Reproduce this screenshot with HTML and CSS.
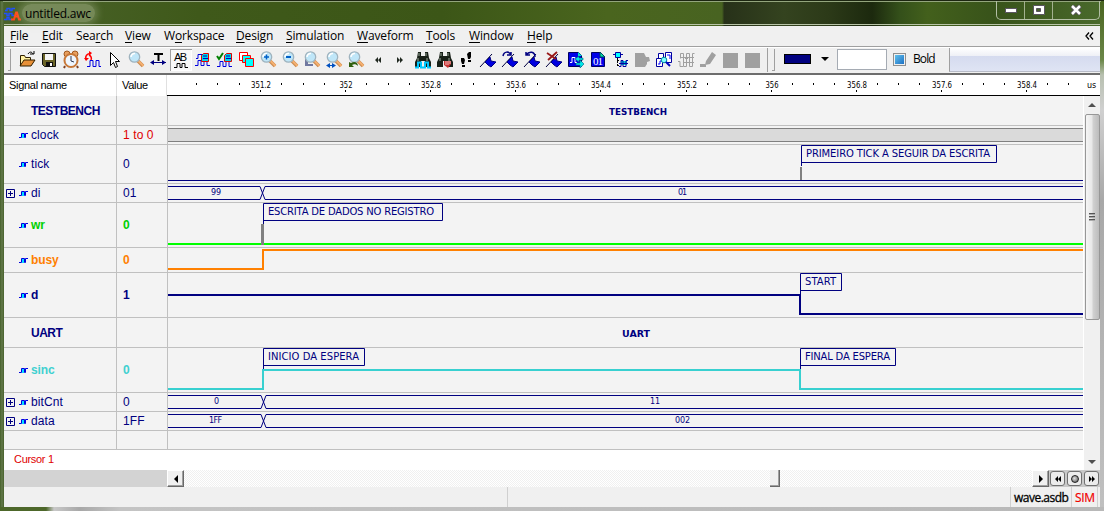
FILE: index.html
```html
<!DOCTYPE html>
<html lang="en">
<head>
  <meta charset="UTF-8">
  <title>untitled.awc</title>
  <link rel="stylesheet" href="styles.css">
</head>
<body>
  <svg class="defs">
    <symbol id="lens" viewBox="0 0 22 22">
      <path d="M12 12l5 5" stroke="#c98a50" stroke-width="3.500"/>
      <path d="M12.5 12l5 5" stroke="#f5b070" stroke-width="2"/>
      <circle cx="8.500" cy="8" r="5.200" fill="#bfe6f8" stroke="#9fb3be" stroke-width="1.300"/>
      <path d="M5 8a3.500 3.500 0 0 1 4-3.500" stroke="#fff" stroke-width="1.500" fill="none"/>
    </symbol>
    <symbol id="flag" viewBox="0 0 22 22">
      <path d="M2 18L14 5" stroke="#000040" fill="none"/>
      <path d="M7 13l5-5 1 4 5 1-5 5-3-2z" fill="#0000e0" stroke="#000080"/>
    </symbol>
    <symbol id="wave" viewBox="0 0 9 7">
      <path d="M3 1h2v5H3z" fill="#00e0ff"/>
      <path d="M0 5.500h2.500v-4h3v4h1v-4h2.500" fill="none" stroke="#0000e0"/>
    </symbol>
    <symbol id="plus" viewBox="0 0 9 9">
      <path d="M.5.5h8v8h-8zM2 4.500h5M4.500 2v5" fill="none" stroke="#000080"/>
    </symbol>
    <symbol id="binoc" viewBox="0 0 22 22">
      <path d="M6 3h3v4h4V3h3l1 6 2 4v5h-6v-6H9v6H3v-5l2-4z" fill="#182018"/>
      <path d="M7 4v3M14 4v3M6 9v3M15 9v3" stroke="#9aa89a"/>
    </symbol>
  </svg>

  <div class="window">
    <header class="title-bar">
      <svg class="app-icon" width="17" height="14" viewBox="0 0 17 14">
        <path d="M1 3.500h2v-2h3v2h2v-2h3M0 6.500h3v2h2v-2h3v2h2M0 12.500h3v-2h2v2h3" fill="none" stroke="#2050ff" stroke-width="1.400"/>
        <path d="M7 12.500h3l2-7h1l2 7h2M10 9.500h5" fill="none" stroke="#ff4a18" stroke-width="2"/>
      </svg>
      <span class="title">untitled.awc</span>
      <div class="window-buttons">
        <span><svg width="14" height="10"><rect x="1.500" y="3.500" width="11" height="4" fill="#fff" stroke="#5a5560"/></svg></span>
        <span><svg width="14" height="12"><path d="M1.500 1.500h11v9h-11z" fill="#fff" stroke="#5a5560"/><path d="M4.500 4.500h4v3h-4z" fill="#4a6030" stroke="#5a5560"/></svg></span>
        <span class="close"><svg width="14" height="12"><path d="M3 2l8 8M11 2l-8 8" stroke="#5a5560" stroke-width="4.500"/><path d="M3 2l8 8M11 2l-8 8" stroke="#fff" stroke-width="2.500"/></svg></span>
      </div>
    </header>

    <div class="client">
      <nav class="menu">
        <span><u>F</u>ile</span><span><u>E</u>dit</span><span>Sea<u>r</u>ch</span><span><u>V</u>iew</span><span>W<u>o</u>rkspace</span><span><u>D</u>esign</span><span><u>S</u>imulation</span><span><u>W</u>aveform</span><span><u>T</u>ools</span><span><u>W</u>indow</span><span><u>H</u>elp</span>
        <svg class="chevrons" width="9" height="8"><path d="M4 .5L1 4l3 3.500M8 .5L5 4l3 3.500" fill="none" stroke="#000" stroke-width="1.300"/></svg>
      </nav>

      <div class="toolbar">
        <i class="grip"></i>
        <div class="tools">
          <!-- open, save, recent, restart -->
          <svg><path d="M4.500 16.500v-10h4l1 2h5v3" fill="#fff0a0" stroke="#302000"/><path d="M4 17l4-6h11l-4 6z" fill="#e89038" stroke="#302000"/><path d="M12 5c2-3 4-2 5 0m-3 0h4V2" fill="none" stroke="#000"/></svg>
          <svg><path d="M4.500 4.500h13v13h-11l-2-2z" fill="#6a6428" stroke="#101010"/><path d="M7 5h8v6H7z" fill="#f4f4f4"/><path d="M8 13h7v5H8z" fill="#101010"/><path d="M12 14h2v3h-2z" fill="#fff"/></svg>
          <svg><path d="M5 17l-1 2M17 17l1 2" stroke="#804020" stroke-width="2"/><circle cx="7" cy="5" r="3" fill="#e8a060" stroke="#a05820"/><circle cx="15" cy="5" r="3" fill="#e8a060" stroke="#a05820"/><circle cx="11" cy="11.500" r="6.500" fill="#eef6ff" stroke="#c87838" stroke-width="2"/><path d="M11 7v5l3 1" fill="none" stroke="#303850"/></svg>
          <svg><path d="M4 10c-1-3 1-5 4-5.500M9 11c1-2 0-4-2-5" fill="none" stroke="#f00" stroke-width="1.500"/><path d="M7 2l3 2-3 3zM2 9h5l-3 3z" fill="#f00"/><path d="M5 17.500h3v-6h3v6h3v-6h3v6h2" fill="none" stroke="#0000e0"/></svg>
          <svg><path d="M6.500 3.500v13l3-3 2 5 2-1-2-5h4z" fill="#fff" stroke="#000"/></svg>
          <svg><use href="#lens"/></svg>
          <svg><path d="M6 5h9M10.500 5v7" stroke="#000" stroke-width="2"/><path d="M4 13.500h14" stroke="#000080"/><path d="M6 11l-4 2.500L6 16zM14 11l4 2.500-4 2.500z" fill="#000080"/></svg>
          <svg class="pressed"><text x="4" y="12" class="ab" textLength="13">AB</text><path d="M4 18.500h3v-4h3v4h2v-4h3v4h3" fill="none" stroke="#000"/></svg>
          <!-- signal tools -->
          <svg><path d="M3 16.500h3v-5h3v5h3v-5h3v5h3M4 9.500h2v-4h4v4" fill="none" stroke="#0000e0"/><path d="M9.500 6.500l2-2h5v8h-7z" fill="#00d8e8" stroke="#e00000"/><path d="M11 9.500h5M11 7h4" stroke="#0000c0"/></svg>
          <svg><path d="M3 7l2 3 4-6" fill="none" stroke="#008000" stroke-width="2"/><path d="M3 17.500h3v-5h3v5h3v-5h3v5h3" fill="none" stroke="#0000e0"/><path d="M10.500 6.500l2-2h5v8h-7z" fill="#00d8e8" stroke="#e00000"/><path d="M12 9.500h5M12 7h4" stroke="#0000c0"/></svg>
          <svg><g fill="#00ffff" stroke="#f00"><path d="M3.500 3.500h8v8h-8z" fill="#fff"/><path d="M6.500 6.500h8v7h-8z"/><path d="M9.500 9.500h8v8h-8z"/></g></svg>
          <!-- zooms -->
          <svg><use href="#lens"/><path d="M6 8h5M8.500 5.500v5" stroke="#0060c8" stroke-width="1.500"/></svg>
          <svg><use href="#lens"/><path d="M6 8h5" stroke="#0060c8" stroke-width="2"/></svg>
          <svg><path d="M3 7h3v10H3zM6 15h5v2H6z" fill="#7078a0"/><use href="#lens"/></svg>
          <svg><use href="#lens"/><path d="M4 16.500h6" stroke="#0050c0"/><path d="M6 14l-4 2.500L6 19zM8 14l4 2.500-4 2.500z" fill="#0050c0"/></svg>
          <svg><use href="#lens"/><path d="M3 13v5h5l-2-2c2-1 4-1 6 1 0-4-4-5-7-3z" fill="#306010"/></svg>
          <svg><path d="M10 8v6l-3-3zM13 8v6l-3-3z" fill="#202820"/></svg>
          <svg><path d="M7 8v6l3-3zM10 8v6l3-3z" fill="#202820"/></svg>
          <svg><use href="#binoc"/><path d="M3 18.500h3v-5h3v5h4v-5h3v5h3" fill="none" stroke="#00c8ff" stroke-width="2"/></svg>
          <svg><use href="#binoc"/><path d="M10 12h7v3l-3 4-4-3z" fill="#c83030"/><path d="M12 12v4M14 12v4M16 12v3" stroke="#fff" stroke-width=".7"/></svg>
          <svg><path d="M5 9h3l1 2-1 4H6l-1-3zM6 16h3v2H6zM11 5l2-2h2v5l-1 2h-2zM12 11h3v2h-3z" fill="#000"/></svg>
          <svg><use href="#flag"/></svg>
          <svg><use href="#flag"/><path d="M3 7c1-5 6-5 8-1m-4 0h4V3" fill="none" stroke="#000080" stroke-width="1.500"/></svg>
          <svg><use href="#flag"/><path d="M13 8c0-6-6-6-9-2m0-3v3h4" fill="none" stroke="#000080" stroke-width="1.500"/></svg>
          <svg><use href="#flag"/><path d="M3 4l9 6M13 3L4 11" stroke="#981818" stroke-width="1.800"/></svg>
          <!-- views -->
          <svg><path d="M2.500 3.500h10l3 3v11h-13z" fill="#0000e8" stroke="#000060"/><path d="M12 3v4h4z" fill="#00e0d0"/><path d="M4 13.500h2v-5h3v5h2" fill="none" stroke="#fff"/><path d="M9 10l4-3v2h4v2h-4v2zM18 15l-4-4v3h-4v2h4v3z" fill="#00e8e8" stroke="#006080" stroke-width=".6"/></svg>
          <svg><path d="M3.500 3.500h9l4 4v10h-13z" fill="#0000e8" stroke="#000060"/><path d="M12 3v5h5z" fill="#00e0a0" stroke="#004060"/><text x="5" y="16" class="bin" textLength="10">01</text></svg>
          <svg><path d="M5.500 3.500h5v5h-5z" fill="#00ffff" stroke="#0000a0"/><path d="M3 5.500h2M11 5.500h2" stroke="#0000a0"/><path d="M7.500 9v8M7 11.500h3M7 16.500h3" stroke="#000" stroke-dasharray="2 1"/><path d="M11 12h6v4h-6z" fill="#00c8d8"/><path d="M9 17.500h2v-6h2v6h3v-6h2M9 14.500h9" fill="none" stroke="#0000a0"/></svg>
          <svg><path d="M3 4h9l2 4h3l1 4-3 1v2l-2 3H3z" fill="#a0a0a0"/></svg>
          <svg><path d="M2.500 9.500h6v8h-6zM4.500 4.500h5v5h-5zM11.500 3.500h6v10h-6z" fill="#fff" stroke="#0000a0"/><path d="M4 15h2v-3h2M13 6h3v4" fill="none" stroke="#00f"/><circle cx="10" cy="11" r="2.800" fill="#80ffff" stroke="#0088a0"/><path d="M12 13l4 4" stroke="#0000c0" stroke-width="2"/></svg>
          <svg><path d="M4.500 9.500v-5h3v13h3v-13h3v13h3v-13h2M2 12.500h2v5h3M9 9.500h3M7 13.500h11M5 8.500h13" fill="none" stroke="#a0a0a0"/></svg>
          <svg><path d="M8 12l6-9 4 3-6 9-5 1zM2 15h6v3H2z" fill="#a0a0a0"/></svg>
          <svg><path d="M3 4h15v15H3z" fill="#a0a0a0"/></svg>
          <svg><path d="M3 4h15v15H3z" fill="#a0a0a0"/></svg>
        </div>
        <i class="separator"></i>
        <i class="grip"></i>
        <span class="color-box"></span>
        <i class="drop-arrow"></i>
        <span class="size-box"></span>
        <span class="check"></span>
        <span class="bold-label">Bold</span>
        <div class="toolbar-rest"></div>
      </div>

      <main class="viewer">
        <div class="columns">
          <span class="col-name">Signal name</span>
          <span class="col-value">Value</span>
          <svg class="ruler" id="ruler" width="933" height="20"></svg>
        </div>

        <div class="body">
          <div class="signals">
            <div class="row h30 strong"><span class="name"><i></i><i></i>TESTBENCH</span><span class="value"></span>
              <svg><text x="441" y="19" class="group" textLength="58" lengthAdjust="spacingAndGlyphs">TESTBENCH</text></svg></div>
            <div class="row h19"><span class="name"><i></i><svg><use href="#wave"/></svg>clock</span><span class="value red">1 to 0</span>
              <svg><path d="M0 2h916v14H0z" class="clock-fill"/><path d="M0 2.500h916M0 15.500h916" class="clock-edge"/></svg></div>
            <div class="row h39"><span class="name"><i></i><svg><use href="#wave"/></svg>tick</span><span class="value">0</span>
              <svg><path d="M0 35.500h916"/><path d="M633 22v13" class="event"/><path d="M633.500 21V.5h195v17h-195"/><text x="638" y="12" class="mark" textLength="184">PRIMEIRO TICK A SEGUIR DA ESCRITA</text></svg></div>
            <div class="row h19"><span class="name"><svg class="expand"><use href="#plus"/></svg><svg><use href="#wave"/></svg>di</span><span class="value">01</span>
              <svg><path d="M0 2.500h92l5 13h820M0 15.500h92l5-13h820"/><text x="43" y="11" class="bus" textLength="10">99</text><text x="510" y="11" class="bus" textLength="9">01</text></svg></div>
            <div class="row h45 green"><span class="name"><i></i><svg><use href="#wave"/></svg>wr</span><span class="value">0</span>
              <svg><path d="M0 41h916" class="thick green-line"/><path d="M94.500 21v21" class="event wide"/><path d="M95.500 21V.5h179v17h-179"/><text x="100" y="12" class="mark" textLength="166">ESCRITA DE DADOS NO REGISTRO</text></svg></div>
            <div class="row h25 orange"><span class="name"><i></i><svg><use href="#wave"/></svg>busy</span><span class="value">0</span>
              <svg><path d="M0 21h95V2h821" class="thick orange-line"/></svg></div>
            <div class="row h45 strong"><span class="name"><i></i><svg><use href="#wave"/></svg>d</span><span class="value">1</span>
              <svg><path d="M0 22h632v19h284" class="thick"/><path d="M632.500 22V.5h41v17h-41"/><text x="637" y="12" class="mark" textLength="31">START</text></svg></div>
            <div class="row h30 strong"><span class="name"><i></i><i></i>UART</span><span class="value"></span>
              <svg><text x="454" y="19" class="group" textLength="28" lengthAdjust="spacingAndGlyphs">UART</text></svg></div>
            <div class="row h45 teal"><span class="name"><i></i><svg><use href="#wave"/></svg>sinc</span><span class="value">0</span>
              <svg><path d="M0 41h95V22h537v19h284" class="thick teal-line"/><path d="M95.500 21V.5h101v17h-101M632.500 21V.5h95v17h-95"/><text x="100" y="12" class="mark" textLength="91">INICIO DA ESPERA</text><text x="637" y="12" class="mark" textLength="85">FINAL DA ESPERA</text></svg></div>
            <div class="row h19"><span class="name"><svg class="expand"><use href="#plus"/></svg><svg><use href="#wave"/></svg>bitCnt</span><span class="value">0</span>
              <svg><path d="M0 2.500h93l5 13h820M0 15.500h93l5-13h820"/><text x="46" y="11" class="bus">0</text><text x="482" y="11" class="bus">11</text></svg></div>
            <div class="row h19"><span class="name"><svg class="expand"><use href="#plus"/></svg><svg><use href="#wave"/></svg>data</span><span class="value">1FF</span>
              <svg><path d="M0 2.500h93l5 13h820M0 15.500h93l5-13h820"/><text x="41" y="11" class="bus" textLength="13">1FF</text><text x="507" y="11" class="bus" textLength="15">002</text></svg></div>
            <div class="row h19"><span class="name"></span><span class="value"></span><svg></svg></div>
            <div class="cursor-row"><span>Cursor 1</span></div>
          </div>
          <div class="v-scroll">
            <i class="arrow up"></i>
            <div class="v-thumb"><i></i><i></i><i></i></div>
            <i class="arrow down"></i>
          </div>
        </div>

        <div class="h-scroll">
          <div class="h-pad"></div>
          <span class="step"><svg width="4" height="8"><path d="M4 0v8L0 4z"/></svg></span>
          <div class="h-track"><span class="h-thumb"></span></div>
          <span class="step"><svg width="4" height="8"><path d="M0 0v8l4-4z"/></svg></span>
          <div class="jump-buttons">
            <span><svg width="8" height="6"><path d="M4 0v6L1 3zM7 0v6L4 3z"/></svg></span>
            <span><i class="ball"></i></span>
            <span><svg width="8" height="6"><path d="M1 0v6l3-3zM4 0v6l3-3z"/></svg></span>
          </div>
        </div>
      </main>

      <footer class="status">
        <span class="status-main"></span>
        <span class="status-file"></span>
        <span class="db">wave.asdb</span>
        <span class="sim">SIM</span>
      </footer>
    </div>
  </div>

  <script>
    // time ruler: one label every 85px, three dots between labels
    const ruler = document.getElementById("ruler");
    let marks = "";
    for (let i = 0; i < 10; i++) {
      const x = Math.round(93 + i * 85.100);
      const label = String(Math.round((351.2 + i * 0.8) * 10) / 10);
      const w = label.length > 3 ? 20 : 13;
      marks += `<text x="${x + 1 - w / 2}" y="13" textLength="${w}" lengthAdjust="spacingAndGlyphs">${label}</text><path d="M${x + .5} 15v2"/>`;
    }
    for (let i = -3; i < 40; i++) {
      const x = Math.round(93 + i * 21.270);
      if (i % 4 !== 0 && x < 905) marks += `<path d="M${x + .5} 8v2"/>`;
    }
    ruler.innerHTML = marks + '<text x="920" y="13">us</text>';
  </script>
</body>
</html>
```
FILE: styles.css
```css
* { box-sizing: border-box; }
body {
  margin: 0;
  width: 1104px;
  height: 511px;
  overflow: hidden;
  font-family: "Open Sans", "Noto Sans", sans-serif;
  font-size: 12px;
  color: #000;
}
.defs { display: none; }
svg { flex: none; }
.window {
  height: 511px;
  padding: 0 4px 4px;
  background:
    linear-gradient(#1c2610, #1c2610) left top / 100% 1px no-repeat,
    linear-gradient(#93a57d, #93a57d) 3px 1px / 1098px 1px no-repeat,
    linear-gradient(90deg, #4d672a 46px, #c8c8c8 54px, #a8a8a8 80px, #c4c4c4 120px, #b8b8b8) left bottom / 100% 4px no-repeat,
    linear-gradient(#48631f 0, #6b8748 60px, #b8c0b0 75px, #d0d0d0 110px, #a8a8a8 200px, #c0c0c0 100%) right top / 4px 100% no-repeat,
    linear-gradient(90deg, #46602a, #63794b 50%, #46602a) left top / 4px 100% no-repeat,
    linear-gradient(90deg, #4b642b 0, #3f591a 18%, #3c5617 40%, #4a651e 55%, #486321 65.4%, #273119 65.6%, #34431f 71%, #2c3a18 75%, #1c290e 79%, #34501a 81.500%, #43601c 84%, #38531a 90%, #4a6a2c 100%);
}

/* title bar */
.title-bar {
  height: 25px;
  display: flex;
  padding-top: 1px;
  border-bottom: 1px solid #b8c4a8;
  margin-bottom: 1px;
}
.app-icon { margin-top: 6px; }
.title {
  margin: 3px 0 0 1px;
  padding: 0 4px 0 3px;
  height: 18px;
  line-height: 19px;
  font-size: 12px;
  letter-spacing: -.2px;
  background: rgba(190, 200, 165, .4);
  border-radius: 9px;
  box-shadow: 0 0 7px 3px rgba(190, 200, 165, .3);
}
.window-buttons {
  margin-left: auto;
  width: 104px;
  height: 19px;
  display: flex;
  border: 1px solid #b3bfa5;
  border-top: 0;
  border-radius: 0 0 5px 5px;
}
.window-buttons span {
  width: 28px;
  display: flex;
  justify-content: center;
  align-items: center;
  border-right: 1px solid #a3b190;
}
.window-buttons .close { width: 46px; border: 0; }

.client {
  height: 481px;
  background: #f0f0f0;
  display: flex;
  flex-direction: column;
}
/* menu */
.menu {
  height: 21px;
  padding-left: 6px;
  border-bottom: 1px solid #a0a0a0;
  display: grid;
  grid-template-columns: 32px 34px 49px 39px 72px 50px 71px 69px 43px 58px 40px 1fr;
  line-height: 20px;
  letter-spacing: -.15px;
}
.menu u { text-underline-offset: 2px; }
.chevrons { justify-self: end; margin: 6px 6px 0 0; }

/* toolbar */
.toolbar {
  height: 28px;
  display: flex;
  border-top: 1px solid #fff;
  border-bottom: 2px solid #6d6d6d;
}
.grip {
  width: 3px;
  height: 22px;
  margin: 1px 0 0 4px;
  border: 1px solid #a0a0a0;
  border-width: 0 1px 1px 0;
}
.tools { display: flex; margin-left: 5px; }
.tools svg { width: 22px; height: 22px; margin-top: 1px; fill: none; }
.tools .pressed { background: #f8f8f8; box-shadow: inset 1px 1px #a0a0a0, inset -1px -1px #fff; }
.ab { font: 11px "Liberation Sans", sans-serif; fill: #000; }
.bin { font: 11px "Liberation Serif", serif; fill: #fff; }
.separator { width: 1px; height: 24px; margin-left: 3px; background: #a0a0a0; }
.separator + .grip { margin-left: 4px; }
.color-box { width: 27px; height: 10px; margin: 6px 0 0 9px; background: #000080; border: 1px solid #000; }
.drop-arrow { height: 0; border: 4px solid transparent; border-top-color: #000; border-bottom: 0; margin: 9px 0 0 10px; }
.size-box { width: 50px; height: 21px; margin: 1px 0 0 8px; background: #fff; border: 1px solid #a5abb3; }
.check {
  width: 13px;
  height: 13px;
  margin: 5px 0 0 6px;
  border: 1px solid #8e8f8f;
  background: linear-gradient(135deg, #67c9f0, #1668c0);
  background-clip: content-box;
  padding: 1px;
}
.bold-label { width: 36px; margin: 2px 0 0 7px; letter-spacing: -.9px; line-height: 18px; }
.toolbar-rest {
  flex: 1;
  height: 24px;
  border-left: 1px solid #a0a0a0;
  border-bottom: 1px solid #b8bcc8;
  background: linear-gradient(#fff, #eef0f6 35%, #d5dbef 36%, #dfe4f4);
}

/* column header and ruler */
.viewer { display: flex; flex-direction: column; }
.columns {
  height: 21px;
  display: flex;
  background: #fff;
  font: 11px/20px "Liberation Sans", sans-serif;
  letter-spacing: -.3px;
}
.columns span { border-right: 1px solid #e0e0e0; }
.col-name { width: 113px; padding-left: 5px; }
.col-value { width: 50px; padding-left: 5px; }
.ruler { border-bottom: 1px solid #000; height: 21px; }
.ruler text { font: 8px "DejaVu Sans", sans-serif; fill: #000; letter-spacing: 0; }
.ruler path { stroke: #000; }

/* signal rows */
.body { height: 374px; display: flex; }
.signals { width: 1080px; background: #fff; }
.row {
  width: 1079px;
  display: flex;
  background: #f3f3f3;
  border-bottom: 1px solid #c0c0c0;
  color: #000080;
  font: 12px "Liberation Sans", sans-serif;
  letter-spacing: .1px;
}
.h19 { height: 19px; }
.h25 { height: 25px; }
.h30 { height: 30px; }
.h39 { height: 39px; }
.h45 { height: 45px; }
.name, .value { display: flex; align-items: center; border-right: 1px solid #c0c0c0; }
.name { width: 113px; padding-left: 2px; }
.name i:first-child, .name .expand { width: 9px; height: 9px; margin-right: 4px; }
.name svg, .name i { width: 9px; height: 7px; margin-right: 3px; }
.value { width: 51px; padding-left: 6px; }
.row > svg { width: 915px; height: 100%; fill: none; stroke: #000080; }
.row text { stroke: none; fill: #000080; }
.value.red { color: #e00000; }
.strong, .green, .orange, .teal { font-weight: bold; }
.orange, .teal, .green { letter-spacing: -.1px; }
.strong { letter-spacing: -.5px; }
.green { color: #00d000; }
.orange { color: #ff8000; }
.teal { color: #40d0d0; }
.thick { stroke-width: 2; }
.green-line { stroke: #00ff00; }
.orange-line { stroke: #ff8000; }
.teal-line { stroke: #38d0d0; }
.clock-fill { fill: #dadada; stroke: none; }
.clock-edge { stroke: #808080; }
.event { stroke: #808080; stroke-width: 2; }
.wide { stroke-width: 3; }
.mark { font: 10px "DejaVu Sans", sans-serif; letter-spacing: 0; }
.bus { font: 8px "DejaVu Sans", sans-serif; letter-spacing: 0; }
.group { font: bold 8px "DejaVu Sans", sans-serif; letter-spacing: 0; }
.cursor-row {
  height: 20px;
  padding-left: 10px;
  line-height: 19px;
  color: #e00000;
  font-family: "Liberation Sans", sans-serif;
  font-size: 11px;
  letter-spacing: -.3px;
}

/* scrollbars */
.v-scroll { width: 16px; background: #f0f0f0; display: flex; flex-direction: column; align-items: center; }
.arrow { border: 4px solid transparent; height: 0; }
.up { border-top: 0; border-bottom-color: #505050; margin: 7px 0; }
.down { border-bottom: 0; border-top-color: #505050; margin: auto 0 6px; }
.v-thumb {
  width: 15px;
  height: 206px;
  border: 1px solid #979797;
  border-radius: 2px;
  background: linear-gradient(90deg, #f5f5f5, #e8e8e8 45%, #d0d0d0 55%, #bcbcbc);
  display: flex;
  flex-direction: column;
  align-items: center;
  justify-content: center;
  gap: 1px;
}
.v-thumb i { width: 6px; height: 2px; background: #555; border-bottom: 1px solid #aaa; }
.h-scroll { height: 17px; display: flex; background: #f0f0f0; }
.h-pad { width: 163px; background: #d3d3d3; }
.step {
  width: 17px;
  display: flex;
  justify-content: center;
  align-items: center;
  background: #f0f0f0;
  border: 1px solid #fff;
  border-right-color: #696969;
  border-bottom-color: #696969;
  box-shadow: inset -1px -1px #a0a0a0;
}
.h-track { width: 848px; background: repeating-conic-gradient(#fff 0 25%, #f0f0f0 0 50%) 0 0 / 2px 2px; }
.h-thumb {
  display: block;
  width: 10px;
  height: 17px;
  margin-left: 586px;
  background: #f0f0f0;
  border-right: 1px solid #696969;
  border-bottom: 1px solid #696969;
  box-shadow: inset -1px -1px #a0a0a0;
}
.jump-buttons { flex: 1; display: flex; justify-content: space-between; background: #c8c8c8; padding: 1px 1px 0; }
.jump-buttons span {
  width: 15px;
  height: 15px;
  display: flex;
  justify-content: center;
  align-items: center;
  border: 1px solid #707070;
  border-radius: 3px;
  background: #ececec;
}
.ball { width: 8px; height: 8px; border: 1px solid #202020; border-radius: 50%; background: radial-gradient(at 40% 40%, #e0e0e0, #505050); }

/* status bar */
.status { height: 20px; display: flex; line-height: 22px; letter-spacing: -.3px; }
.status span { border-right: 1px solid #d0d0d0; }
.status-main { width: 504px; }
.status-file { width: 503px; }
.db { width: 61px; padding-left: 3px; letter-spacing: -.5px; -webkit-text-stroke: .3px #000; }
.sim { width: 26px; padding-left: 3px; color: #f00000; -webkit-text-stroke: .2px #f00000; }
```
